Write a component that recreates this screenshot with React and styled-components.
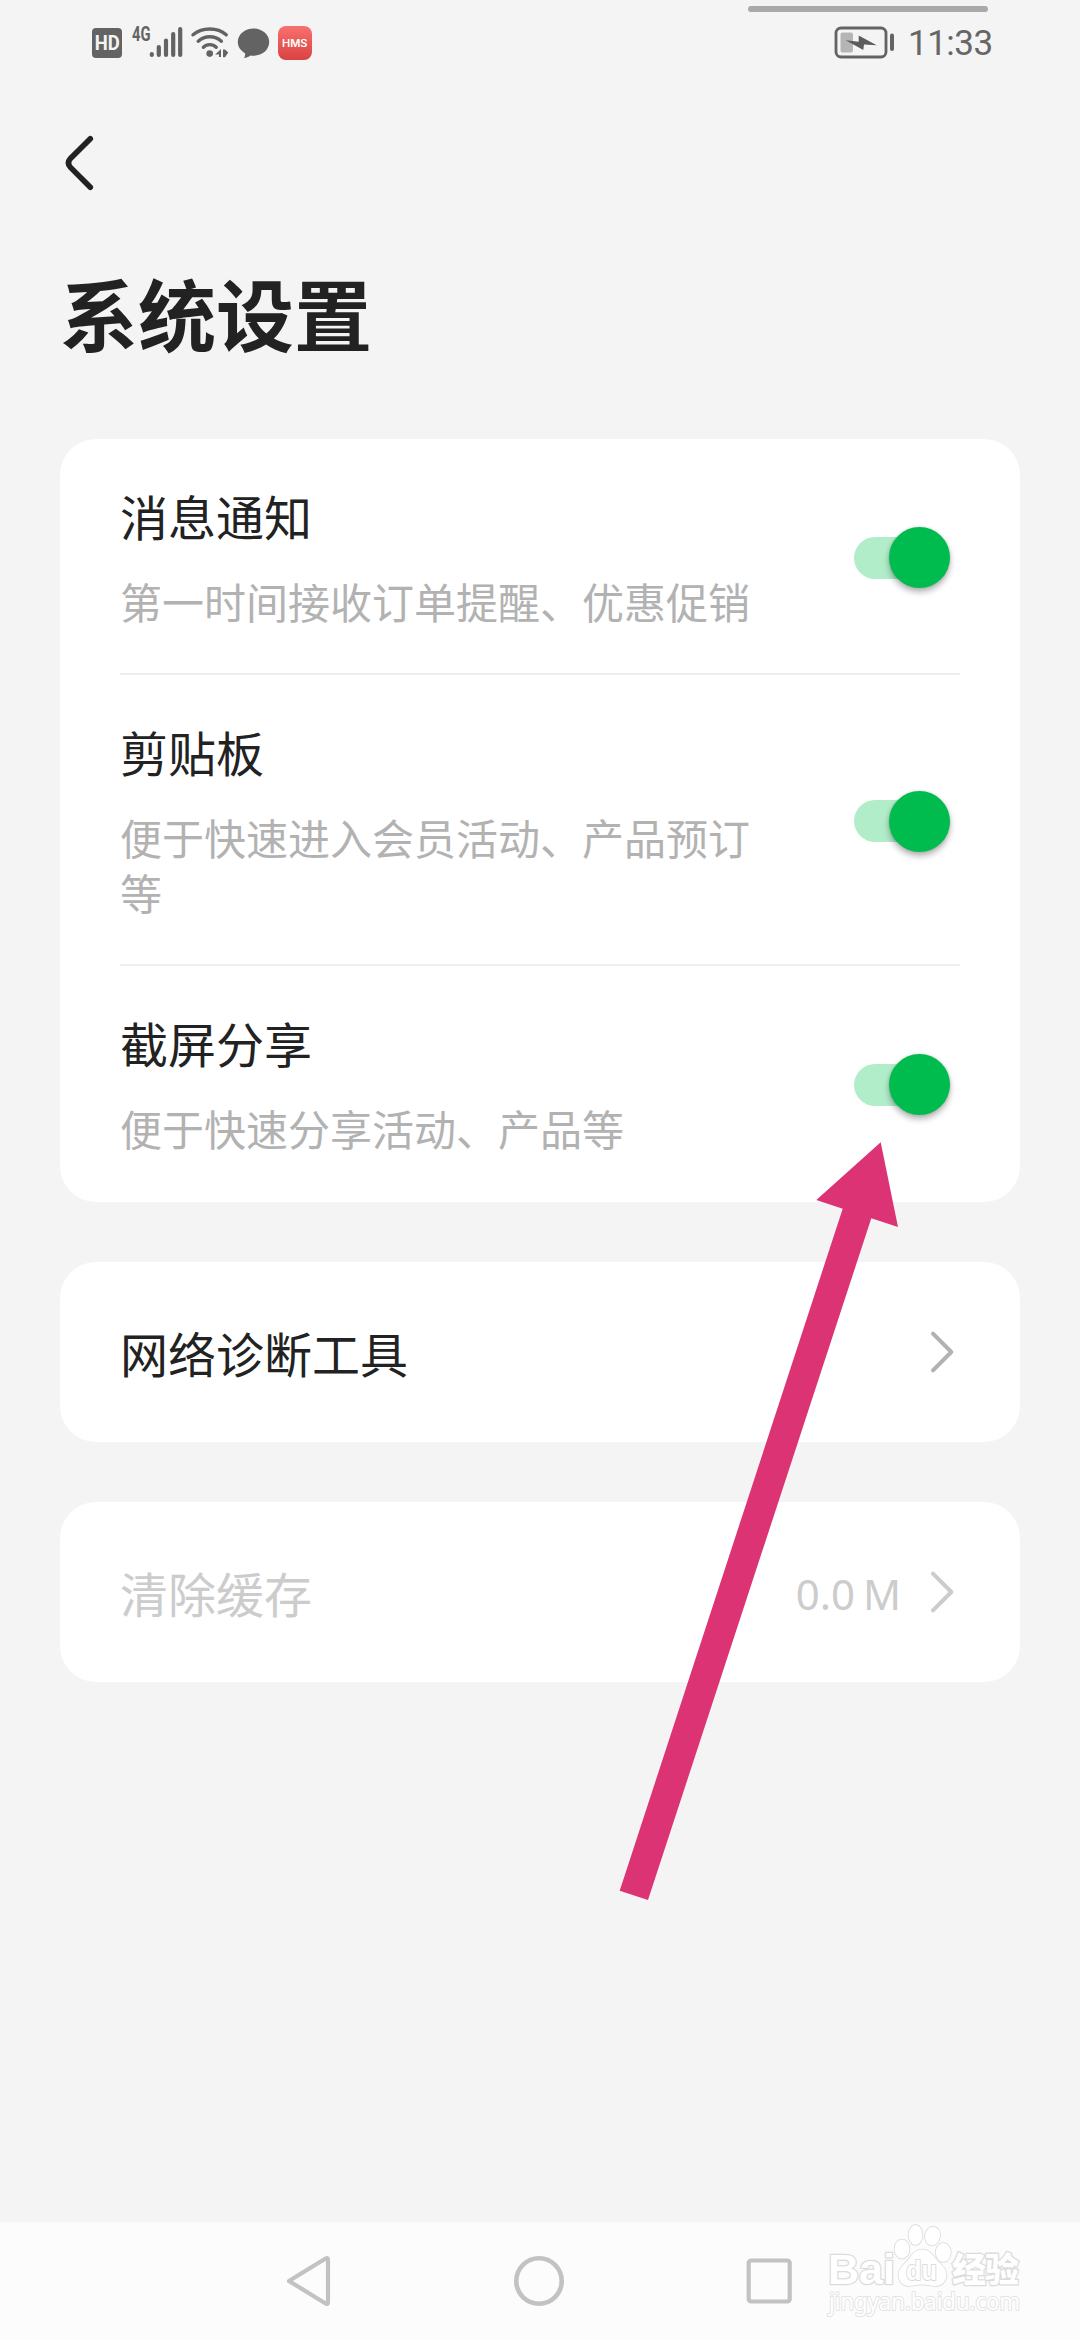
import React, { useState } from 'react';
import styled, { createGlobalStyle } from 'styled-components';

const GlobalStyle = createGlobalStyle`
  * {
    box-sizing: border-box;
  }
  body {
    margin: 0;
    background: #f4f4f4;
    font-family: "Noto Sans CJK SC", "Noto Sans", sans-serif;
  }
`;

const Screen = styled.div`
  position: relative;
  display: flex;
  flex-direction: column;
  width: 1080px;
  height: 2340px;
  overflow: hidden;
  background: #f4f4f4;
  color: #222;
`;

const StatusBar = styled.header`
  display: flex;
  justify-content: space-between;
  height: 86px;
  padding: 26px 88px 0 92px;
`;

const StatusGroup = styled.div`
  display: flex;
  align-items: center;
  gap: ${(props) => props.$gap};
  height: 34px;
  svg {
    overflow: visible;
  }
`;

const Clock = styled.span`
  width: 84px;
  padding-top: 2px;
  font-family: Roboto, sans-serif;
  font-size: 35px;
  letter-spacing: -0.5px;
  line-height: 34px;
  color: #666;
  white-space: nowrap;
`;

// thin grey handle that hangs over the status bar
const Handle = styled.div`
  position: absolute;
  top: 6px;
  left: 748px;
  width: 240px;
  height: 6px;
  border-radius: 3px;
  background: #a9a9a9;
`;

const TopBar = styled.div`
  height: 154px;
  padding: 46px 0 0 60px;
`;

const BackButton = styled.button`
  display: block;
  padding: 0;
  border: none;
  background: none;
  cursor: pointer;
  svg {
    display: block;
  }
`;

const PageTitle = styled.h1`
  height: 199px;
  margin: 0;
  padding: 16px 0 0 60px;
  font-size: 78px;
  font-weight: 700;
  line-height: 112px;
`;

const Cards = styled.main`
  display: flex;
  flex-direction: column;
  flex: 1;
  gap: 60px;
  padding: 0 60px;
`;

const Card = styled.section`
  padding: 0 60px;
  border-radius: 36px;
  background: #fff;
`;

const SwitchRow = styled.div`
  display: flex;
  align-items: center;
  justify-content: space-between;
  padding: 46px 10px ${(props) => (props.$last ? '47px' : '45px')} 0;
  border-bottom: ${(props) => (props.$last ? 'none' : '2px solid #eee')};
`;

const RowTexts = styled.div`
  width: 640px;
`;

const RowTitle = styled.div`
  font-size: 48px;
  line-height: 60px;
  color: ${(props) => (props.$disabled ? '#ccc' : '#222')};
`;

const RowHint = styled.div`
  margin-top: 28px;
  font-size: 42px;
  line-height: 55px;
  color: #b2b2b2;
`;

const Track = styled.button`
  display: flex;
  align-items: center;
  justify-content: ${(props) => (props.$on ? 'flex-end' : 'flex-start')};
  width: 96px;
  height: 42px;
  margin-top: 2px;
  padding: 0;
  border: none;
  border-radius: 21px;
  background: ${(props) => (props.$on ? '#b2edca' : '#ddd')};
  cursor: pointer;
`;

const Knob = styled.span`
  flex: none;
  width: 61px;
  height: 61px;
  border-radius: 50%;
  background: ${(props) => (props.$on ? '#00bc4f' : '#fff')};
  box-shadow: 0 4px 6px rgba(0, 0, 0, 0.3), 0 0 3px rgba(0, 0, 0, 0.12);
`;

const LinkRow = styled.div`
  display: flex;
  align-items: center;
  height: 180px;
  padding-right: 4px;
`;

const Spacer = styled.span`
  flex: 1;
`;

const CacheSize = styled.span`
  margin-right: 29px;
  padding-top: 4px;
  font-family: "Noto Sans", sans-serif;
  font-size: 42px;
  line-height: 60px;
  word-spacing: -3px;
  color: #ccc;
`;

const NavBar = styled.nav`
  display: flex;
  align-items: center;
  justify-content: space-between;
  height: 118px;
  padding: 0 286px 0 284px;
  background: #fcfcfc;
`;

const ArrowOverlay = styled.svg`
  position: absolute;
  left: 610px;
  top: 1130px;
`;

const Watermark = styled.svg`
  position: absolute;
  left: 820px;
  top: 2216px;
  overflow: visible;
`;

const HdIcon = () => (
  <svg width="30" height="34" viewBox="92 26 30 34">
    <rect x="92" y="28" width="30" height="30" rx="4" fill="#636363" />
    <text x="94.7" y="50.3" fontFamily="Roboto" fontWeight="700" fontSize="20" fill="#f4f4f4" textLength="25" lengthAdjust="spacingAndGlyphs">HD</text>
  </svg>
);

const SignalIcon = () => (
  <svg width="55" height="34" viewBox="129 26 55 34">
    <text x="132" y="40.5" fontFamily="Roboto" fontWeight="700" fontSize="19.5" fill="#636363" textLength="18.5" lengthAdjust="spacingAndGlyphs">4G</text>
    <g stroke="#636363" strokeWidth="4.2" strokeLinecap="round">
      <path d="M151.8 54.2v.8M158.8 47v8M166 40.5v14.5M173.2 34v21M180.2 29v26" />
    </g>
  </svg>
);

const WifiIcon = () => (
  <svg width="39" height="34" viewBox="191 26 39 34">
    <g fill="none" stroke="#636363" strokeWidth="3.4" strokeLinecap="round">
      <path d="M193 34.8Q200 29 209.8 29Q219.6 29 226.2 34.8" />
      <path d="M198.2 41.2Q203.2 36.8 209.8 36.8Q216.4 36.8 221.4 41.2" />
      <path d="M203.4 47.2Q206 44.6 209.8 44.6Q213.6 44.6 216.2 47.2" />
    </g>
    <circle cx="209.7" cy="53.6" r="3.3" fill="#636363" />
    <path d="M215.2 54.6L221 49v8h-2v-2.4zM223 49.5h2l3.3 3-3.3 4.7h-2z" fill="#636363" />
  </svg>
);

const BubbleIcon = () => (
  <svg width="34" height="34" viewBox="237 26 34 34">
    <path d="M253.5 28.5c8.7 0 15.7 5.8 15.7 13.6s-7 13.7-15.7 13.7c-1 0-2 0-3-.3-2 1.4-4.3 2.5-6.5 2.5.9-1.3 1.3-2.8 1.1-4.7-4.4-2.4-7.3-6.5-7.3-11.2 0-7.8 7-13.6 15.7-13.6z" fill="#636363" />
  </svg>
);

const HmsIcon = () => (
  <svg width="34" height="34" viewBox="278 26 34 34">
    <defs>
      <linearGradient id="hms" x1="0" y1="0" x2="0" y2="1">
        <stop offset="0" stopColor="#f7716e" />
        <stop offset="1" stopColor="#d94242" />
      </linearGradient>
    </defs>
    <rect x="278" y="26" width="34" height="34" rx="8" fill="url(#hms)" />
    <text x="282" y="46.7" fontFamily="Inter" fontWeight="600" fontSize="9.8" fill="#fff" textLength="25.5" lengthAdjust="spacingAndGlyphs">HMS</text>
  </svg>
);

const BatteryIcon = () => (
  <svg width="60" height="34" viewBox="834 26 60 34">
    <rect x="836" y="28" width="50" height="29" rx="5" fill="none" stroke="#636363" strokeWidth="2.8" />
    <rect x="840.5" y="32.5" width="12.5" height="20" rx="2" fill="#b5b5b5" />
    <rect x="890" y="33.5" width="4" height="17.5" rx="2" fill="#636363" />
    <path d="M845.7 40.3L858.7 41.8V35.5L876.7 45.3L864 44.5L863.3 50z" fill="#5c5c5c" />
  </svg>
);

const Chevron = ({ color }) => (
  <svg width="26" height="44" viewBox="930 1330 26 44">
    <path d="M933 1333.7L951.3 1352L933 1370.3" fill="none" stroke={color} strokeWidth="4" strokeLinecap="round" strokeLinejoin="round" />
  </svg>
);

const Switch = ({ on, onToggle }) => (
  <Track $on={on} onClick={onToggle} role="switch" aria-checked={on}>
    <Knob $on={on} />
  </Track>
);

const switches = [
  { key: 'notice', title: '消息通知', hint: '第一时间接收订单提醒、优惠促销' },
  { key: 'clipboard', title: '剪贴板', hint: '便于快速进入会员活动、产品预订等' },
  { key: 'screenshot', title: '截屏分享', hint: '便于快速分享活动、产品等' },
];

export default function App() {
  const [state, setState] = useState({ notice: true, clipboard: true, screenshot: true });

  const toggle = (key) => {
    setState({ ...state, [key]: !state[key] });
  };

  return (
    <>
      <GlobalStyle />
      <Screen>
        <StatusBar>
          <StatusGroup $gap="7px">
            <HdIcon />
            <SignalIcon />
            <WifiIcon />
            <BubbleIcon />
            <HmsIcon />
          </StatusGroup>
          <StatusGroup $gap="14px">
            <BatteryIcon />
            <Clock>11:33</Clock>
          </StatusGroup>
        </StatusBar>
        <Handle />

        <TopBar>
          <BackButton aria-label="返回">
            <svg width="40" height="62" viewBox="60 132 40 62">
              <path d="M90.3 138.8L70.5 158.4Q66.4 163 70.5 167.4L90.3 187.2" fill="none" stroke="#222" strokeWidth="5.6" strokeLinecap="round" />
            </svg>
          </BackButton>
        </TopBar>
        <PageTitle>系统设置</PageTitle>

        <Cards>
          <Card>
            {switches.map((item, i) => (
              <SwitchRow key={item.key} $last={i === switches.length - 1}>
                <RowTexts>
                  <RowTitle>{item.title}</RowTitle>
                  <RowHint>{item.hint}</RowHint>
                </RowTexts>
                <Switch on={state[item.key]} onToggle={() => toggle(item.key)} />
              </SwitchRow>
            ))}
          </Card>
          <Card>
            <LinkRow>
              <RowTitle>网络诊断工具</RowTitle>
              <Spacer />
              <Chevron color="#b2b2b2" />
            </LinkRow>
          </Card>
          <Card>
            <LinkRow>
              <RowTitle $disabled>清除缓存</RowTitle>
              <Spacer />
              <CacheSize>0.0 M</CacheSize>
              <Chevron color="#ccc" />
            </LinkRow>
          </Card>
        </Cards>

        <NavBar>
          <svg width="50" height="54" viewBox="284 2254 50 54">
            <path d="M289 2281L326 2258.3Q328 2257.3 328 2260V2302Q328 2304.7 326 2303.7Z" fill="none" stroke="#c2c2c2" strokeWidth="4.2" strokeLinejoin="round" />
          </svg>
          <svg width="54" height="54" viewBox="513 2254 54 54">
            <circle cx="540" cy="2281" r="22.7" fill="none" stroke="#c2c2c2" strokeWidth="4.6" />
          </svg>
          <svg width="50" height="54" viewBox="744 2254 50 54">
            <rect x="748.7" y="2260.5" width="41" height="41" rx="2.5" fill="none" stroke="#c2c2c2" strokeWidth="4.2" />
          </svg>
        </NavBar>

        <ArrowOverlay width="300" height="780" viewBox="610 1130 300 780">
          <path d="M880.7 1142.3L898 1227L871.3 1218.3L648 1900L619.7 1890.7L842.7 1208.7L816.3 1200Z" fill="#dc3374" />
        </ArrowOverlay>

        <Watermark width="210" height="120" viewBox="820 2216 210 120">
          <g fill="#fff" stroke="#dcdcdc" strokeWidth="2.6" strokeLinejoin="round" paintOrder="stroke">
            <text x="828" y="2284" fontFamily="Liberation Sans" fontWeight="700" fontSize="43" textLength="67" lengthAdjust="spacingAndGlyphs">Bai</text>
            <g strokeWidth="1.5" stroke="#d8d8d8">
              <ellipse cx="902" cy="2249" rx="7.5" ry="9.5" />
              <ellipse cx="915.5" cy="2235" rx="7" ry="10" />
              <ellipse cx="932.5" cy="2236" rx="7.5" ry="9.5" transform="rotate(10 932.5 2236)" />
              <ellipse cx="943.3" cy="2252.5" rx="7.5" ry="9.5" />
              <path d="M922 2249.5c6 0 10 4 13 8.5 4 5 11.5 9.5 11.5 16.5 0 7-5 11.5-11 11.5-5 0-8-1.5-13.5-1.5s-8 1.5-13 1.5c-6 0-10.5-4.5-10.5-11.5 0-7 7-11 11-16.5 3-4.5 6.5-8.5 12.5-8.5z" />
            </g>
            <text x="906" y="2279.5" fontFamily="Liberation Sans" fontWeight="700" fontSize="27" textLength="31" lengthAdjust="spacingAndGlyphs" strokeWidth="2">du</text>
            <text x="952" y="2282" fontFamily="Noto Sans CJK SC" fontWeight="900" fontSize="34" textLength="67">经验</text>
            <text x="829" y="2310" fontFamily="Noto Sans" fontSize="23" strokeWidth="2" textLength="191" lengthAdjust="spacingAndGlyphs" stroke="#e4e4e4">jingyan.baidu.com</text>
          </g>
        </Watermark>
      </Screen>
    </>
  );
}
